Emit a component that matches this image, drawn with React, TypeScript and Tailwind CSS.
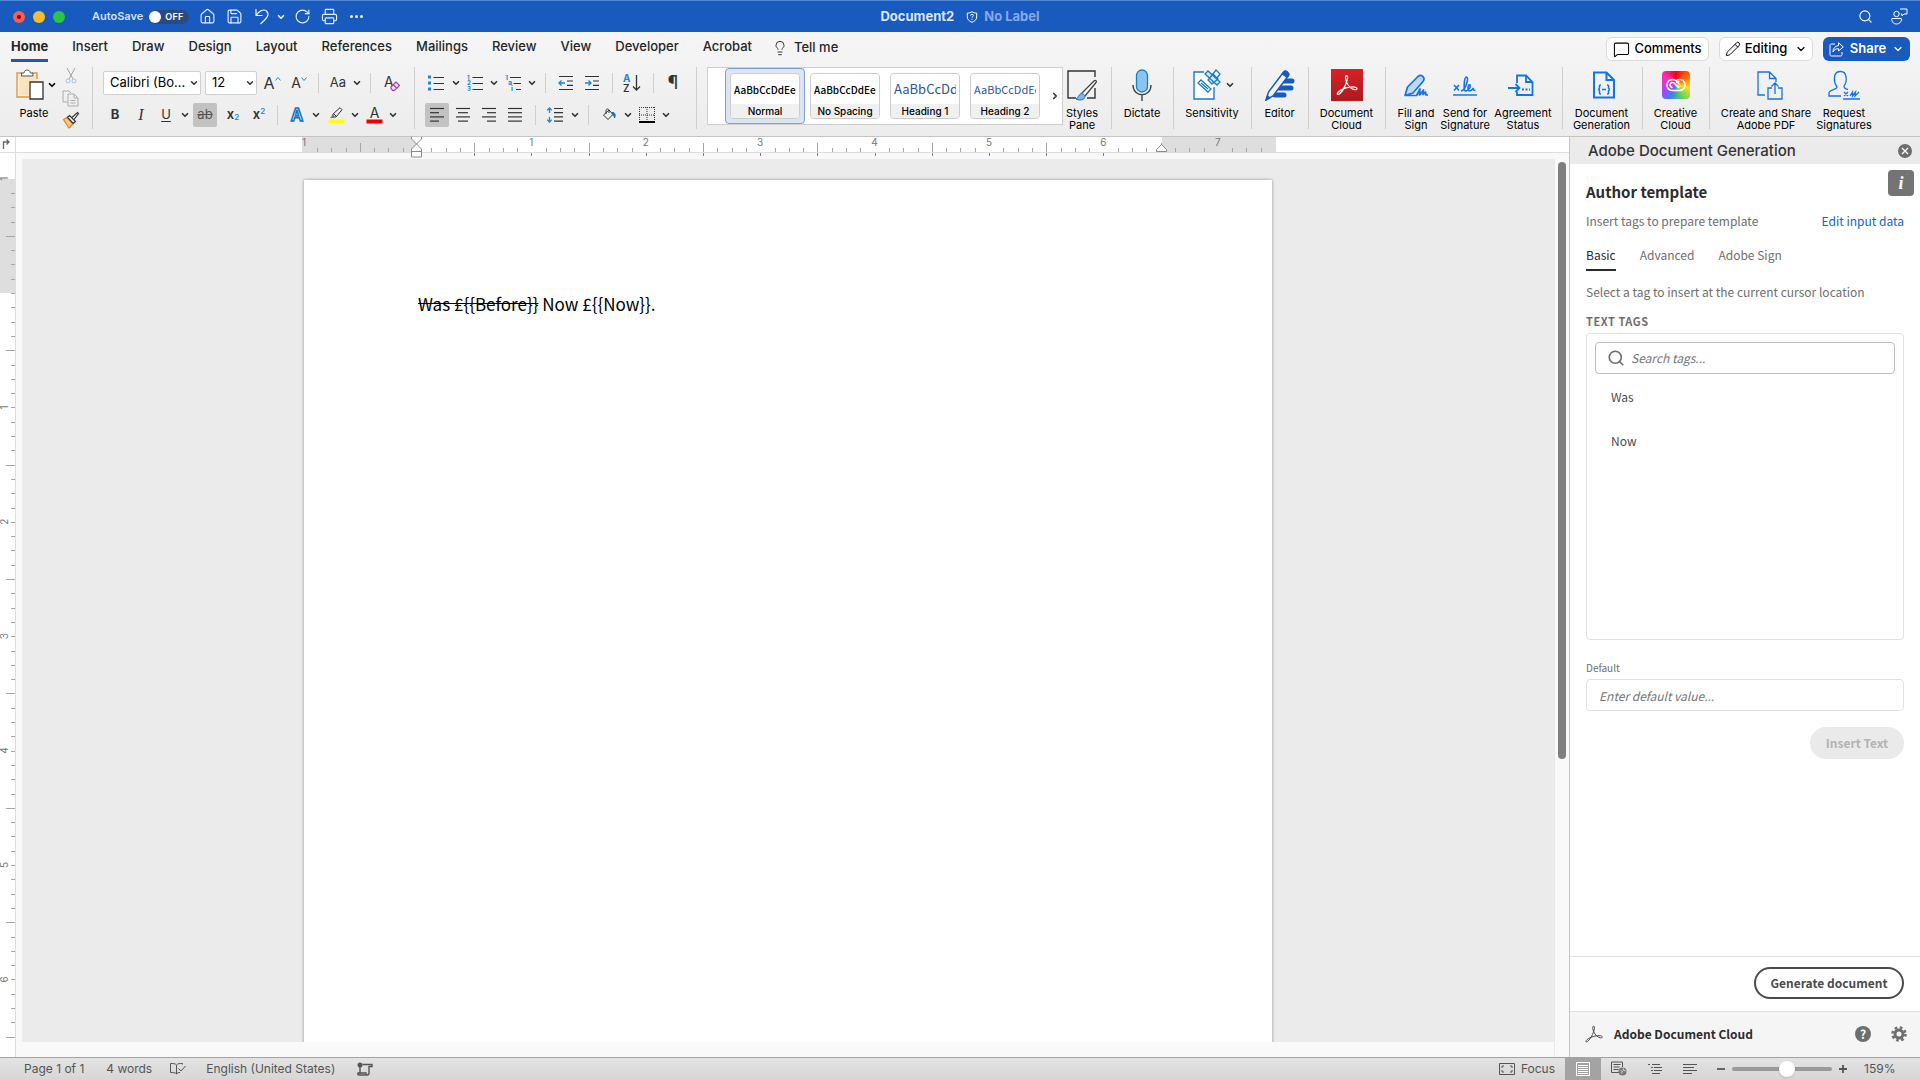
import { useState, type ReactNode } from "react";
import { ChevronDown, ChevronRight, Home, Save, RotateCw, Printer, Search, MessageSquare, Pencil, Lightbulb } from "lucide-react";
import clsx from "clsx";

const TABS = ["Home", "Insert", "Draw", "Design", "Layout", "References", "Mailings", "Review", "View", "Developer", "Acrobat"];

const STYLES = [
  { name: "Normal", sample: "text-[10px] font-medium text-black" },
  { name: "No Spacing", sample: "text-[10px] font-medium text-black" },
  { name: "Heading 1", sample: "text-[13px] text-[#2f5597]" },
  { name: "Heading 2", sample: "text-[11px] text-[#2f5597]" },
];

const INCH = 114.4;

function Icon({ className, box = "0 0 16 16", children }: { className: string; box?: string; children: ReactNode }) {
  return (
    <svg viewBox={box} className={clsx("shrink-0", className)} fill="none" stroke="currentColor" aria-hidden="true">
      {children}
    </svg>
  );
}

function Tool({ label, className, children }: { label: string; className: string; children: ReactNode }) {
  return (
    <button aria-label={label} className={clsx("flex h-6 shrink-0 items-center justify-center", className)}>
      {children}
    </button>
  );
}

function Caret({ label, className }: { label: string; className: string }) {
  return (
    <Tool label={label} className={className}>
      <ChevronDown className="size-2.5 shrink-0" strokeWidth={4} />
    </Tool>
  );
}

function Separator({ className }: { className: string }) {
  return (
    <div className={clsx("flex shrink-0 justify-center", className)}>
      <div className="h-full w-px bg-[#cfcfcf]" />
    </div>
  );
}

function Lines({ rows }: { rows: [number, number][] }) {
  return (
    <Icon className="size-4">
      {rows.map(([x1, x2], i) => (
        <path key={i} d={`M${x1} ${1.5 + i * 4.2}H${x2}`} strokeWidth="1.2" />
      ))}
    </Icon>
  );
}

function BigTool({ label, className, icon }: { label: string[]; className: string; icon: ReactNode }) {
  return (
    <button className={clsx("flex shrink-0 flex-col items-center gap-1 text-[11px] leading-3 whitespace-nowrap text-black", className)}>
      <span className="flex h-9 items-center justify-center">{icon}</span>
      <span>
        {label.map((l) => (
          <span key={l} className="block">{l}</span>
        ))}
      </span>
    </button>
  );
}

function TitleBar() {
  return (
    <header className="grid h-8 shrink-0 grid-cols-[1fr_auto_1fr] items-center border-t border-[#4f86d6] bg-[#185abd] text-white">
      <div className="flex items-center pl-[13px]">
        <div className="flex gap-2">
          <span className="flex size-3 items-center justify-center rounded-full bg-[#fc5b57]">
            <span className="size-1 rounded-full bg-[#7c0a08]" />
          </span>
          <span className="size-3 rounded-full bg-[#fdbc2e]" />
          <span className="size-3 rounded-full bg-[#28c840]" />
        </div>
        <span className="ml-[27px] text-[11px] font-semibold text-[#d3e1f7]">AutoSave</span>
        <button role="switch" aria-checked="false" aria-label="AutoSave" className="ml-1.5 flex h-[14px] w-10 items-center gap-1 rounded-full bg-[#2b4a80] text-[9px] font-semibold tracking-wide">
          <span className="size-3 rounded-full bg-white" />
          OFF
        </button>
        <div className="ml-2.5 flex items-center text-[#e6effb]">
          <button aria-label="Home"><Home className="size-[17px]" strokeWidth={1.6} /></button>
          <button aria-label="Save" className="ml-2.5"><Save className="size-[17px]" strokeWidth={1.6} /></button>
          <button aria-label="Undo" className="ml-[11px]">
            <Icon className="size-[17px]" box="0 0 17 17">
              <path d="M2 1v6.500h6.500M2 7.500C5 3 9.500.5 12.500 3c3.500 3.500 1 6.500-6 13" strokeWidth="1.200" />
            </Icon>
          </button>
          <button aria-label="Undo history" className="ml-[5px]"><ChevronDown className="size-2.5" strokeWidth={4} /></button>
          <button aria-label="Redo" className="ml-2"><RotateCw className="size-[17px]" strokeWidth={1.6} /></button>
          <button aria-label="Print" className="ml-2.5"><Printer className="size-[17px]" strokeWidth={1.6} /></button>
          <button aria-label="More" className="ml-3 flex gap-0.5">
            <span className="size-[3px] rounded-full bg-current" />
            <span className="size-[3px] rounded-full bg-current" />
            <span className="size-[3px] rounded-full bg-current" />
          </button>
        </div>
      </div>
      <div className="flex items-center text-[13px] font-bold">
        <h1 className="text-[#dbe7f9]">Document2</h1>
        <Icon className="ml-3 size-3" box="0 0 12 12">
          <path d="M6 .7c1.400 1 3 1.400 4.700 1.400V6c0 2.500-2 4.300-4.700 5.300C3.300 10.300 1.300 8.500 1.300 6V2.100C3 2.100 4.600 1.700 6 .7zM4.600 4.600c0-1.800 2.800-1.700 2.800 0 0 .9-1.400 1-1.400 2.100M6 7.800v1" />
        </Icon>
        <span className="ml-1.5 text-[#84abe6]">No Label</span>
      </div>
      <div className="flex items-center justify-end gap-[18px] pr-3">
        <button aria-label="Search"><Search className="size-[15px]" strokeWidth={1.8} /></button>
        <button aria-label="Presence">
          <Icon className="size-[17px]" box="0 0 17 17">
            <circle cx="5.500" cy="6" r="2.700" />
            <path d="M1 10.500h9c.5 0 .7.300.6.800-.5 3-2.300 4.700-5.100 4.700S1.200 14.500.7 11.500c0-.6.100-1 .3-1zM9 1h7v5h-3l-2 2V6H9.800" />
          </Icon>
        </button>
      </div>
    </header>
  );
}

function TabRow() {
  const [active, setActive] = useState("Home");
  return (
    <div className="flex h-8 shrink-0 items-center justify-between pr-2.5 pl-[11px]">
      <nav className="flex items-center gap-6 text-[13px] font-medium text-[#262626]">
        {TABS.map((t) => (
          <button
            key={t}
            onClick={() => setActive(t)}
            className={clsx("h-7 border-b-[3px] pt-px", t === active ? "border-[#2b579a] font-bold" : "border-transparent")}
          >
            {t}
          </button>
        ))}
        <button className="-ml-1 flex items-center gap-1.5">
          <Lightbulb className="size-4" strokeWidth={1.4} />
          Tell me
        </button>
      </nav>
      <div className="flex gap-2.5 pt-0.5 text-[13px] font-medium text-black">
        <button className="flex h-6 w-[103px] items-center justify-center gap-1 rounded-md border border-[#dcdcdc] bg-white">
          <MessageSquare className="size-[17px]" strokeWidth={1.5} />
          Comments
        </button>
        <button className="flex h-6 w-[94px] items-center justify-center gap-1 rounded-md border border-[#dcdcdc] bg-white">
          <Pencil className="size-4" strokeWidth={1.4} />
          Editing
          <ChevronDown className="ml-1 size-3" strokeWidth={2.4} />
        </button>
        <button className="flex h-6 w-[87px] items-center justify-center gap-1.5 rounded-md bg-[#185abd] font-semibold text-white">
          <Icon className="size-[15px]" box="0 0 15 15">
            <path d="M6 2H2.500C1.500 2 1 2.500 1 3.500v9c0 1 .5 1.500 1.500 1.500h9c1 0 1.500-.5 1.500-1.500V10M9.500.8 14.300 5 9.500 9V6.700C6.800 6.600 5 7.800 4 10c0-3.600 2-6 5.500-6.400z" strokeLinejoin="round" />
          </Icon>
          Share
          <ChevronDown className="size-3" strokeWidth={2.4} />
        </button>
      </div>
    </div>
  );
}

function ClipboardGroup() {
  return (
    <div className="flex w-[85px] shrink-0 pl-3">
      <div className="flex w-11 flex-col items-center">
        <div className="flex h-9 items-center self-start pl-1">
          <button aria-label="Paste">
            <Icon className="h-8 w-7" box="0 0 28 32">
              <path d="M6 4H1v24h12" stroke="#e8963a" strokeWidth="1.400" />
              <path d="M3 6v20h10V12h8V6z" fill="#fbe3bd" stroke="none" />
              <path d="M16 4h5v6" stroke="#e8963a" strokeWidth="1.400" />
              <path d="M5.500 7V4H8c.3-4 6-4 6.400 0h2.500v3z" fill="#fff" stroke="#555" />
              <path d="M14 13h13v17H14z" fill="#fff" stroke="#333" strokeWidth="1.300" />
            </Icon>
          </button>
          <Caret label="Paste options" className="ml-[3px] w-2.5" />
        </div>
        <span className="mt-1 text-[11px] leading-3 text-black">Paste</span>
      </div>
      <div className="ml-1.5 flex flex-col gap-1">
        <button aria-label="Cut">
          <Icon className="size-[18px]" box="0 0 18 18">
            <path d="M5 1l6 11M13 1 7 12" stroke="#a3a3a3" />
            <circle cx="6" cy="14" r="2" stroke="#9cc7e8" />
            <circle cx="12" cy="14" r="2" stroke="#9cc7e8" />
          </Icon>
        </button>
        <button aria-label="Copy">
          <Icon className="size-[18px]" box="0 0 18 18">
            <path d="M5 13H1V2h6l2 2M6 5h6l4 4v8H6zM12 5v4h4M8.500 11.500h5M8.500 14h5" stroke="#ababab" />
          </Icon>
        </button>
        <button aria-label="Format painter">
          <Icon className="size-[18px]" box="0 0 18 18">
            <path d="M1.500 8.500 5 6.500l6 6.500-4 4z" fill="#f8c68a" stroke="#e8862c" strokeWidth="1.300" />
            <path d="m5.500 6.200 2-1.700 6 6-2.300 2zM10 6.500l5.500-5 1 1L12 8.500" fill="#fff" stroke="#333" strokeWidth="1.200" />
          </Icon>
        </button>
      </div>
    </div>
  );
}

function FontGroup() {
  return (
    <div className="flex w-[308px] shrink-0 flex-col gap-2 pl-1 text-[#333]">
      <div className="flex h-6 items-center">
        <div className="relative flex h-6 w-[98px] shrink-0 items-center">
          <select aria-label="Font" className="size-full appearance-none rounded-xs border border-[#d0d0d0] bg-white pl-1.5 text-[13px] text-black">
            <option>Calibri (Bo...</option>
          </select>
          <ChevronDown className="pointer-events-none absolute right-0.5 size-2.5" strokeWidth={3.5} />
        </div>
        <div className="relative ml-1 flex h-6 w-[52px] shrink-0 items-center">
          <select aria-label="Font size" className="size-full appearance-none rounded-xs border border-[#d0d0d0] bg-white pl-1.5 text-[13px] text-black">
            <option>12</option>
          </select>
          <ChevronDown className="pointer-events-none absolute right-0.5 size-2.5" strokeWidth={3.5} />
        </div>
        <Tool label="Increase font size" className="w-[30px] text-base">
          A<Icon className="mb-2 size-1.5" box="0 0 6 6"><path d="m.5 4.500 2.500-3 2.500 3" stroke="#1e88d2" /></Icon>
        </Tool>
        <Tool label="Decrease font size" className="w-6 text-sm">
          A<Icon className="mb-2 size-1.5" box="0 0 6 6"><path d="m.5 1.500 2.500 3 2.500-3" stroke="#1e88d2" /></Icon>
        </Tool>
        <Separator className="h-5 w-[14px]" />
        <Tool label="Change case" className="w-[26px] text-[13px]">Aa</Tool>
        <Caret label="Case options" className="w-3" />
        <Separator className="h-5 w-[14px]" />
        <Tool label="Clear formatting" className="w-[30px]">
          <Icon className="size-4">
            <text x="0" y="12" fontSize="14" fill="#333" stroke="none">A</text>
            <path d="m7 12 5-5 3.500 3.300-5 5H8.500L7 13.500z M9.300 9.800l3.400 3.300" fill="#f2e2f5" stroke="#a33cb5" strokeWidth="1.200" />
          </Icon>
        </Tool>
      </div>
      <div className="flex h-6 items-center">
        <Tool label="Bold" className="w-6 text-[13px] font-bold">B</Tool>
        <Tool label="Italic" className="w-7 font-['Liberation_Serif',serif] text-base italic">I</Tool>
        <Tool label="Underline" className="w-[22px] text-[13px] underline underline-offset-2">U</Tool>
        <Caret label="Underline options" className="w-4" />
        <Tool label="Strikethrough" className="w-6 rounded-xs bg-[#c2c2c2] text-[13px] text-[#555] line-through">ab</Tool>
        <Tool label="Subscript" className="w-8 text-[13px] font-semibold">x<sub className="text-[8px] text-[#1e88d2]">2</sub></Tool>
        <Tool label="Superscript" className="w-5 text-[13px] font-semibold">x<sup className="text-[8px] text-[#1e88d2]">2</sup></Tool>
        <Separator className="h-5 w-4" />
        <Tool label="Text effects" className="w-6">
          <Icon className="size-[18px]" box="0 0 18 18">
            <text x="9" y="15" textAnchor="middle" fontSize="17" fontWeight="600" fill="#fff" stroke="#1670c4" strokeWidth="1.500">A</text>
          </Icon>
        </Tool>
        <Caret label="Text effect options" className="w-[14px]" />
        <Tool label="Highlight" className="w-[26px]">
          <Icon className="size-[17px]" box="0 0 17 17">
            <path d="m5 7 7-6.300 2 2L8 10H4.500zM5.500 6.500l3 3" />
            <path d="M2 11h4l1-1.500-2-2z" fill="#777" stroke="none" />
            <path d="M.5 14.500h16" stroke="#ffff00" strokeWidth="4" />
          </Icon>
        </Tool>
        <Caret label="Highlight options" className="w-3" />
        <Tool label="Font color" className="w-[26px]">
          <Icon className="size-[17px]" box="0 0 17 17">
            <text x="8.500" y="11" textAnchor="middle" fontSize="14" fill="#333" stroke="none">A</text>
            <path d="M.5 14.500h16" stroke="#f00000" strokeWidth="4" />
          </Icon>
        </Tool>
        <Caret label="Font color options" className="w-3" />
      </div>
    </div>
  );
}

function ParagraphGroup() {
  return (
    <div className="flex w-[268px] shrink-0 flex-col gap-2 text-[#333]">
      <div className="flex h-6 items-center">
        <Tool label="Bullets" className="w-[30px]">
          <Icon className="size-4">
            <path d="M0 2h3M0 8h3M0 14h3" stroke="#1e88d2" strokeWidth="3" />
            <path d="M5.500 2.500H16M5.500 8.500H16M5.500 14.500H16" strokeWidth="1.200" />
          </Icon>
        </Tool>
        <Caret label="Bullet options" className="w-2.5" />
        <Tool label="Numbering" className="w-7">
          <Icon className="size-4">
            {["1", "2", "3"].map((n, i) => (
              <text key={n} x="0" y={4.5 + i * 5.7} fontSize="6" fontWeight="700" fill="#1e88d2" stroke="none">{n}</text>
            ))}
            <path d="M5.500 2.500H16M5.500 8.500H16M5.500 14.500H16" strokeWidth="1.200" />
          </Icon>
        </Tool>
        <Caret label="Numbering options" className="w-2.5" />
        <Tool label="Multilevel list" className="w-7">
          <Icon className="size-4">
            {["1", "a", "i"].map((n, i) => (
              <text key={n} x={i * 3} y={4.5 + i * 5.7} fontSize="7" fontWeight="700" fill="#1e88d2" stroke="none">{n}</text>
            ))}
            <path d="M5 2.500h11M8.500 8.500H16M11 14.500h5" strokeWidth="1.200" />
          </Icon>
        </Tool>
        <Caret label="Multilevel options" className="w-2.5" />
        <Separator className="h-5 w-4" />
        <Tool label="Decrease indent" className="w-[26px]">
          <Icon className="size-4">
            <path d="M1 1.500h14M9 6h6M9 10.300h6M1 14.500h14" strokeWidth="1.200" />
            <path d="M7 8H1m2.500-2.500L1 8l2.500 2.500" stroke="#1e88d2" strokeWidth="1.400" />
          </Icon>
        </Tool>
        <Tool label="Increase indent" className="w-[26px]">
          <Icon className="size-4">
            <path d="M1 1.500h14M9 6h6M9 10.300h6M1 14.500h14" strokeWidth="1.200" />
            <path d="M1 8h6M4.500 5.500 7 8l-2.500 2.500" stroke="#1e88d2" strokeWidth="1.400" />
          </Icon>
        </Tool>
        <Separator className="h-5 w-[14px]" />
        <Tool label="Sort" className="w-[26px]">
          <Icon className="size-[18px]" box="0 0 18 18">
            <text x="0" y="8" fontSize="10" fontWeight="700" fill="#1e88d2" stroke="none">A</text>
            <text x="0" y="17.500" fontSize="10" fontWeight="600" fill="#333" stroke="none">Z</text>
            <path d="M13.500 1v15M10 12.500l3.500 3.500 3.500-3.500" strokeWidth="1.300" />
          </Icon>
        </Tool>
        <Separator className="h-5 w-4" />
        <Tool label="Show formatting marks" className="w-6 text-lg">¶</Tool>
      </div>
      <div className="flex h-6 items-center pl-1">
        <Tool label="Align left" className="w-6 rounded-xs bg-[#c2c2c2]"><Lines rows={[[1, 15], [1, 10], [1, 15], [1, 10]]} /></Tool>
        <Tool label="Center" className="w-7"><Lines rows={[[1, 15], [3, 13], [1, 15], [3, 13]]} /></Tool>
        <Tool label="Align right" className="w-6"><Lines rows={[[1, 15], [6, 15], [1, 15], [6, 15]]} /></Tool>
        <Tool label="Justify" className="w-7"><Lines rows={[[1, 15], [1, 15], [1, 15], [1, 15]]} /></Tool>
        <Separator className="h-5 w-3" />
        <Tool label="Line spacing" className="w-7">
          <Icon className="size-4">
            <path d="M2.500 1v5M2.500 10v5M.3 3.200 2.500 1l2.200 2.200M.3 12.800 2.500 15l2.200-2.200" stroke="#1e88d2" strokeWidth="1.300" />
            <path d="M7 1.500h9M7 5.700h9M7 9.900h9M7 14.100h9" strokeWidth="1.200" />
          </Icon>
        </Tool>
        <Caret label="Line spacing options" className="w-3" />
        <Separator className="h-5 w-[14px]" />
        <Tool label="Shading" className="w-7">
          <Icon className="size-[14px]" box="0 0 14 14">
            <path d="M1.500 7 7 2l4 4.500-5 5zM4 6V2.500c0-2 3-2 3 0V5" />
            <path d="M10 4.500c3-.3 4 2.500 2.500 5.500-.2-2-1-3-2-3z" fill="#1670c4" stroke="#1670c4" />
          </Icon>
        </Tool>
        <Caret label="Shading options" className="w-2.5" />
        <Tool label="Borders" className="w-7">
          <Icon className="size-4">
            <path d="M.5 0v15M15.500 0v15M0 .5h16M8 0v15M0 8h16" strokeDasharray="1 1" />
            <path d="M0 15h16" stroke="#000" strokeWidth="2" />
          </Icon>
        </Tool>
        <Caret label="Border options" className="w-2.5" />
      </div>
    </div>
  );
}

function StyleGallery() {
  return (
    <div className="ml-1 flex h-[58px] w-[356px] shrink-0 items-center self-start border border-[#cfcfcf] bg-white pl-[17px]">
      {STYLES.map((s, i) => (
        <button key={s.name} className={clsx("rounded-sm border p-1", i === 0 ? "border-[#7f9fd0] bg-[#dbe5f4]" : "border-transparent")}>
          <span className="flex h-[46px] w-[70px] flex-col overflow-hidden rounded-sm border border-[#cdcdcd] bg-white">
            <span className={clsx("mx-[3px] flex flex-1 items-center overflow-hidden font-['Noto_Sans_CJK_SC',sans-serif] whitespace-nowrap", s.sample)}>
              AaBbCcDdEe
            </span>
            <span className="bg-[#f0f0f0] text-[10px] leading-[14px] font-medium text-black">{s.name}</span>
          </span>
        </button>
      ))}
      <button aria-label="More styles" className="ml-[5px] text-[#333]"><ChevronRight className="size-2.5" strokeWidth={4} /></button>
    </div>
  );
}

const AcrobatMark = () => (
  <path d="M9.800 2.200C8.300 2 8.500 5 9.700 7.600c1.400 3.300 4 5.900 6.800 6.300 2.500.4 2.600-1.900-.2-2.200-3.500-.4-8.600.8-11.900 2.900-2.700 1.700-3 3.400-1.900 3.300 2-.3 5-5 6.500-8.600 1.300-3 2.200-6.800.8-7.100z" />
);

function Ribbon() {
  return (
    <div className="flex h-[73px] shrink-0 overflow-hidden border-b border-[#c4c4c4] pt-[3px]">
      <ClipboardGroup />
      <Separator className="h-[62px] w-[14px]" />
      <div className="pt-1"><FontGroup /></div>
      <Separator className="h-[62px] w-[14px]" />
      <div className="pt-1"><ParagraphGroup /></div>
      <Separator className="h-[62px] w-[14px]" />
      <StyleGallery />
      <BigTool
        label={["Styles", "Pane"]}
        className="w-[38px]"
        icon={
          <Icon className="h-8 w-[30px]" box="0 0 30 32">
            <path d="M9 29H1V2h27v6M28 19v10h-8" stroke="#333" strokeWidth="1.400" />
            <path d="M14 25 27 12c1.500-1.500 3 0 2 1.500L18 27" fill="#fff" stroke="#444" strokeWidth="1.300" />
            <path d="M9 30c2 0 2.500-5 5.500-5.500 2.500 0 4 2.500 3 4.500-1.500 2.500-6 2.500-8.500 1z" fill="#7db9e8" stroke="#1670c4" />
          </Icon>
        }
      />
      <Separator className="h-[62px] w-5" />
      <BigTool
        label={["Dictate"]}
        className="w-[42px]"
        icon={
          <Icon className="h-8 w-5" box="0 0 20 32">
            <rect x="4.500" y="1" width="11" height="22" rx="5.500" fill="#8cc4f0" stroke="#1a7cc8" strokeWidth="1.300" />
            <path d="M1 16c0 13 18 13 18 0M10 26v6" stroke="#444" strokeWidth="1.400" />
          </Icon>
        }
      />
      <Separator className="h-[62px] w-5" />
      <BigTool
        label={["Sensitivity"]}
        className="w-[58px]"
        icon={
          <>
            <Icon className="ml-1 h-8 w-7 text-[#1a7cc8]" box="0 0 28 32">
              <path d="M11 3H1v27h20V18" fill="#fff" strokeWidth="1.400" />
              <path d="M5 14 8 11l10 9-3 3zM8 14l7 6" strokeWidth="1.300" />
              <path d="m12 5 3-3 12 11-3 3zM15 11l5-6 5 5-6 5z" fill="#d5e9f8" strokeWidth="1.300" />
              <path d="m20 5 3-4 4 4-3 4z" fill="#fff" strokeWidth="1.300" />
            </Icon>
            <ChevronDown className="ml-1 size-2.5 text-[#333]" strokeWidth={4} />
          </>
        }
      />
      <Separator className="h-[62px] w-5" />
      <BigTool
        label={["Editor"]}
        className="w-[37px]"
        icon={
          <Icon className="h-8 w-[30px] text-[#185abd]" box="0 0 30 32">
            <path d="M17 12h10M14 19h12M10 26h9" strokeWidth="5" strokeLinecap="round" />
            <path d="M1 31 3.500 23 19 2.500c1.500-1.500 6 1.500 4.500 4L8 27z" fill="#f3f3f3" strokeWidth="1.500" />
            <path d="m17 5 2-2.500c1.500-1.500 6 1.500 4.500 4L22 8.500zM1 31l1.400-4.500L5 28.600z" fill="currentColor" />
          </Icon>
        }
      />
      <Separator className="h-[62px] w-5" />
      <BigTool
        label={["Document", "Cloud"]}
        className="w-[57px]"
        icon={
          <span className="flex size-8 items-center justify-center bg-linear-to-b from-[#dc1f26] to-[#a81c20] text-white">
            <Icon className="size-6" box="0 0 20 20"><AcrobatMark /></Icon>
          </span>
        }
      />
      <Separator className="h-[62px] w-5" />
      <BigTool
        label={["Fill and", "Sign"]}
        className="w-[42px]"
        icon={
          <Icon className="size-6 text-[#1473e6]" box="0 0 24 24">
            <path d="M1 22.500 3.500 14 14 3.500c3-3 8 1 5 5L9 20l-8 2.500h11.500L16 16l-.5 6 4-5-.5 4.500 2.500-2.500.5 3h2" fill="#bcd8f8" strokeWidth="1.700" strokeLinejoin="round" />
          </Icon>
        }
      />
      <BigTool
        label={["Send for", "Signature"]}
        className="w-14"
        icon={
          <Icon className="size-6 text-[#1473e6]" box="0 0 24 24">
            <path d="m1 12 5 5.500M6 12l-5 5.500M0 22h24M8 18c5-1 8-13 5.500-14C11 4 10 19 13 18c3-1 5-4 4-6-2-1.500-3 6-.5 6 2 0 4-3 4-3s-1 3 2 2.500" strokeWidth="1.600" />
          </Icon>
        }
      />
      <BigTool
        label={["Agreement", "Status"]}
        className="w-[60px]"
        icon={
          <Icon className="mr-1 h-6 w-[26px] text-[#1473e6]" box="0 0 26 24">
            <path d="M9 10V2.500h9L24.500 9v13H9v-3M18 2.500V9h6.500M0 15h11M7.500 11l4 4-4 4" strokeWidth="1.800" />
            <path d="M14 16.500h8" strokeWidth="1.800" strokeDasharray="2 1.500" />
          </Icon>
        }
      />
      <Separator className="h-[62px] w-[18px]" />
      <BigTool
        label={["Document", "Generation"]}
        className="w-[61px]"
        icon={
          <Icon className="ml-1 h-7 w-6 text-[#1473e6]" box="0 0 24 28">
            <path d="M2 1.500h12.500L22 9v17.500H2zM14.500 1.500V9H22" strokeWidth="2" />
            <path d="M9 14c-2 0-1.500 1-1.500 2.500S7 18.500 6 18.500c1 0 1.500.5 1.500 2S7 23 9 23M15 14c2 0 1.500 1 1.500 2.500s.5 2 1.500 2c-1 0-1.500.5-1.500 2s.5 2.500-1.500 2.500M10 18.500h4" strokeWidth="1.500" />
          </Icon>
        }
      />
      <Separator className="h-[62px] w-5" />
      <BigTool
        label={["Creative", "Cloud"]}
        className="w-[47px]"
        icon={
          <span className="flex size-7 items-center justify-center rounded-sm bg-[conic-gradient(from_0deg,#f4001c,#ff6a00,#f6e02a,#5ad35a,#3d7df0,#c43cf0,#f531b4,#f4001c)] text-white">
            <Icon className="size-[22px]" box="0 0 22 22">
              <path d="M7.500 16.500a5.500 5.500 0 1 1 3.300-9.800l4.200 4M14.500 16.500a5.500 5.500 0 1 0-3.800-9.300M7.500 13.500a2.500 2.500 0 1 1 1.700-4.400l5 5M7.500 16.500h7M11 9c1-1 2-1.500 3.500-1.500" strokeWidth="1.500" />
            </Icon>
          </span>
        }
      />
      <Separator className="h-[62px] w-5" />
      <BigTool
        label={["Create and Share", "Adobe PDF"]}
        className="w-[94px]"
        icon={
          <Icon className="ml-2 h-[30px] w-[26px] text-[#1473e6]" box="0 0 26 30">
            <path d="M8 25H1V2h11.500l6.500 6.500V12M12.500 2v6.500H19M15 18h-4v11h14V18h-4M18 24V13m-3.500 3.500L18 13l3.500 3.500" strokeWidth="1.300" />
          </Icon>
        }
      />
      <BigTool
        label={["Request", "Signatures"]}
        className="w-[62px]"
        icon={
          <Icon className="h-[30px] w-8 text-[#1473e6]" box="0 0 32 30">
            <path d="M13 26H1v-3c0-3 8-3.500 8-6-3-4-5-15 3-15.500s7 10.500 4 14.500c0 2 1 3 4 3.500M16 22l4 4M20 22l-4 4M15 29h17M22 26l2.500-4v4l3-4-.5 4 4-4" strokeWidth="1.300" />
          </Icon>
        }
      />
    </div>
  );
}

function HorizontalRuler() {
  const zero = 115;
  const ticks = Array.from({ length: 67 }, (_, i) => i - 7).filter((n) => n < 60);
  return (
    <div className="flex h-4 shrink-0 border-b border-[#dedede] bg-white">
      <div className="w-4 shrink-0 border-r border-[#dedede] text-[#666]">
        <Icon className="h-4 w-3" box="0 0 12 16"><path d="M3.500 12V5H9M6.500 2.500 9 5 6.500 7.500" strokeWidth="1.300" /></Icon>
      </div>
      <div className="flex min-w-0 flex-1 justify-center pr-[14px] pl-1.5">
        <svg width="974" height="22" className="relative shrink-0 overflow-visible">
          <path d="M0 0H114V15H0zM860 0h114v15H860z" fill="#dedede" />
          {ticks.map((n) => {
            const x = Math.round(zero + (n * INCH) / 8);
            const whole = n % 8 === 0;
            const half = n % 4 === 0;
            return (
              <g key={n} stroke="#a6a6a6">
                {!whole && <path d={`M${x + 0.5} ${half ? 6 : 11}V15`} />}
                {half && n > 0 && n < 52 && <path d={`M${x + 0.5} 16V19`} stroke="#808080" />}
              </g>
            );
          })}
          {[1, 2, 3, 4, 5, 6, 7].map((n) => (
            <text key={n} x={zero + n * INCH} y="9" textAnchor="middle" fontSize="10" fill="#777">{n}</text>
          ))}
          <text x="0" y="9" fontSize="10" fill="#777">1</text>
          <path d="M109.500 0v2l5 5 5-5V0M114.500 7l5 5v8h-10v-8zM109.500 14.500h10M859.500 7.500l5 5v2h-10v-2z" fill="#fff" stroke="#8a8a8a" />
        </svg>
      </div>
    </div>
  );
}

function VerticalRuler() {
  const zero = 140;
  return (
    <div className="w-4 shrink-0 overflow-hidden border-r border-[#dedede] bg-white">
      <svg width="15" height="1000">
        <path d="M0 26H15V140H0z" fill="#dedede" />
        {Array.from({ length: 60 }, (_, i) => i - 7).map((n) => {
          const y = Math.round(zero + (n * INCH) / 8) + 0.5;
          return <path key={n} d={`M${n % 8 !== 0 && n % 4 === 0 ? 6 : 11} ${y}H15`} stroke="#a6a6a6" />;
        })}
        {[-1, 1, 2, 3, 4, 5, 6].map((n) => {
          const y = zero + n * INCH;
          return (
            <text key={n} x="8" y={y} transform={`rotate(-90 8 ${y})`} textAnchor="middle" fontSize="10" fill="#777">{Math.abs(n)}</text>
          );
        })}
      </svg>
    </div>
  );
}

function DocumentArea() {
  return (
    <main className="flex min-w-0 flex-1 flex-col">
      <HorizontalRuler />
      <div className="flex min-h-0 flex-1">
        <VerticalRuler />
        <div className="flex min-w-0 flex-1 bg-[#f9f9f9] pt-1.5 pl-1.5">
          <div className="mb-[15px] flex min-w-0 flex-1 justify-center overflow-hidden bg-[#ebebeb] pt-[21px]">
            <article className="h-[1258px] w-[968px] shrink-0 bg-white px-[114px] pt-28 shadow-[0_0_3px_rgba(0,0,0,0.4)]">
              <p className="font-['Noto_Sans_CJK_SC',sans-serif] text-[17px] leading-6 text-black">
                <s>{"Was £{{Before}}"}</s>
                {" Now £{{Now}}."}
              </p>
            </article>
          </div>
          <div className="w-[15px] shrink-0 border-l border-[#e8e8e8] pt-[3px] pl-[3px]">
            <div className="h-[597px] w-2 rounded-full bg-[#7f7f7f]" />
          </div>
        </div>
      </div>
    </main>
  );
}

function GenerationPane() {
  const [tab, setTab] = useState("Basic");
  return (
    <aside className="flex w-[351px] shrink-0 flex-col border-l border-[#c4c4c4] bg-white font-['Noto_Sans_CJK_SC',sans-serif] text-xs leading-5 text-[#6e6e6e]">
      <div className="flex h-[27px] shrink-0 items-center justify-between bg-[#ebebeb] pr-2 pl-[18px]">
        <h2 className="font-['Inter',sans-serif] text-[15px] font-medium text-[#333]">Adobe Document Generation</h2>
        <button aria-label="Close" className="flex size-[14px] items-center justify-center rounded-full bg-[#6e6e6e] text-white">
          <Icon className="size-2" box="0 0 8 8"><path d="m1 1 6 6M7 1 1 7" strokeWidth="1.300" /></Icon>
        </button>
      </div>
      <div className="flex min-h-0 flex-1 flex-col px-4">
        <div className="flex h-[47px] items-start justify-between pt-[18px]">
          <h3 className="text-[15px] leading-5 font-bold text-[#2c2c2c]">Author template</h3>
          <button aria-label="Information" className="-mt-3 -mr-2.5 flex size-[26px] items-center justify-center rounded-sm bg-[#747474] font-['Liberation_Serif',serif] text-lg font-bold text-white italic">i</button>
        </div>
        <div className="flex justify-between">
          <span>Insert tags to prepare template</span>
          <a href="#edit" className="text-[#0d66d0]">Edit input data</a>
        </div>
        <div role="tablist" className="mt-3.5 flex gap-6">
          {["Basic", "Advanced", "Adobe Sign"].map((t) => (
            <button
              key={t}
              role="tab"
              aria-selected={t === tab}
              onClick={() => setTab(t)}
              className={clsx("border-b-2 pb-1", t === tab ? "border-[#2c2c2c] text-[#2c2c2c]" : "border-transparent")}
            >
              {t}
            </button>
          ))}
        </div>
        <p className="mt-[11px] whitespace-nowrap">Select a tag to insert at the current cursor location</p>
        <h4 className="mt-[9px] text-[11px] leading-5 font-bold tracking-wider">TEXT TAGS</h4>
        <div className="mt-0.5 h-[307px] rounded-sm border border-[#e1e1e1] p-2">
          <div className="flex h-8 items-center gap-1.5 rounded-sm border border-[#bcbcbc] pl-[11px]">
            <Search className="size-[18px]" strokeWidth={2.2} />
            <input aria-label="Search tags" placeholder="Search tags..." className="min-w-0 flex-1 italic outline-none placeholder:text-[#757575]" />
          </div>
          <ul className="pt-px text-[#4b4b4b]">
            <li className="flex h-11 items-center pl-4">Was</li>
            <li className="flex h-11 items-center pl-4">Now</li>
          </ul>
        </div>
        <label htmlFor="default-value" className="mt-[18px] text-[10px] leading-5">Default</label>
        <input id="default-value" placeholder="Enter default value..." className="mt-px h-8 shrink-0 rounded-sm border border-[#e1e1e1] pl-3 italic outline-none placeholder:text-[#757575]" />
        <button disabled className="mt-4 h-8 w-[94px] shrink-0 self-end rounded-full bg-[#eaeaea] font-bold text-[#b3b3b3]">Insert Text</button>
      </div>
      <div className="flex h-[55px] shrink-0 items-center justify-end border-t border-[#e1e1e1] pr-4 pb-0.5">
        <button className="h-8 w-[150px] rounded-full border-2 border-[#4b4b4b] font-bold text-[#4b4b4b]">Generate document</button>
      </div>
      <footer className="flex h-[46px] shrink-0 items-center border-t border-[#e1e1e1] bg-[#f5f5f5] pr-[13px] pb-0.5 pl-3.5">
        <Icon className="size-5 text-[#4b4b4b]" box="0 0 20 20"><AcrobatMark /></Icon>
        <span className="ml-2.5 font-bold text-[#2c2c2c]">Adobe Document Cloud</span>
        <button aria-label="Help" className="ml-auto flex size-4 items-center justify-center rounded-full bg-[#6e6e6e] font-bold text-white">?</button>
        <button aria-label="Settings" className="ml-5">
          <Icon className="size-4 text-[#6e6e6e]">
            <circle cx="8" cy="8" r="4" strokeWidth="3" />
            <circle cx="8" cy="8" r="6.500" strokeWidth="2.600" strokeDasharray="2.600 2.505" />
          </Icon>
        </button>
      </footer>
    </aside>
  );
}

function StatusBar() {
  const [zoom, setZoom] = useState(159);
  return (
    <footer className="flex h-[23px] shrink-0 items-center justify-between border-t border-[#a3a3a3] bg-linear-to-b from-[#e3e3e3] to-[#d6d6d6] text-xs text-[#555]">
      <div className="flex items-center pl-6">
        <span>Page 1 of 1</span>
        <span className="ml-[22px]">4 words</span>
        <button aria-label="Proofing" className="ml-[18px]">
          <Icon className="h-[14px] w-4" box="0 0 16 14"><path d="M6.500 3C5.500 1.500 3 1.500.5 1.500v9c2.500 0 5 0 6 1.500 1-1.500 2-1.500 3.500-1.500M6.500 3v9M6.500 3c1-1.500 3-1.500 6-1.500v1M8.500 6.500l2.500 2.500 4.500-5" /></Icon>
        </button>
        <span className="ml-5">English (United States)</span>
        <button aria-label="Macro recording" className="ml-[22px]">
          <Icon className="h-[14px] w-4" box="0 0 16 14">
            <circle cx="3" cy="3" r="2.500" fill="currentColor" stroke="none" />
            <path d="M3 5v7M5.500 2.500H15v2h-3V11c0 1.500-1 2-2 2H2c-1 0-1.500-1-1-2h8v2" strokeWidth="1.400" />
          </Icon>
        </button>
      </div>
      <div className="flex h-full items-center">
        <button className="flex items-center gap-1.5 pr-2.5">
          <Icon className="h-3 w-4" box="0 0 16 12"><path d="M.5.5h15v11H.5zM3 5V3h2M11 3h2v2M13 7v2h-2M5 9H3V7" /></Icon>
          Focus
        </button>
        <button aria-label="Print layout" className="flex h-full w-9 items-center justify-center bg-[#a3a3a3] text-white">
          <Icon className="size-[14px]" box="0 0 14 14"><path d="M.5.500h13v13H.5zM2 3.500h10M2 5.500h10M2 7.500h10M2 9.500h10M2 11.500h10" /></Icon>
        </button>
        <button aria-label="Web layout" className="ml-2.5">
          <Icon className="size-4">
            <path d="M8 11.500H.5V1h11v5M2.500 3.500h7M2.500 6h6M2.500 8.500h5" />
            <circle cx="11.500" cy="10.500" r="4" fill="#777" stroke="none" />
            <path d="M9.500 9.500l2 1-1 2M12.500 7.500l-.5 1.500 2.500 1" stroke="#ddd" />
          </Icon>
        </button>
        <button aria-label="Outline" className="ml-[21px]">
          <Icon className="h-3 w-[14px]" box="0 0 14 12"><path d="M0 1.500h2M4 1.500h8M3 4.500h2M6 4.500h8M3 7.500h2M6 7.500h8M4 10.500h8" /></Icon>
        </button>
        <button aria-label="Draft" className="ml-[21px]">
          <Icon className="h-3 w-[14px]" box="0 0 14 12"><path d="M0 1.500h14M0 4.500h11M0 7.500h14M0 10.500h9" /></Icon>
        </button>
        <button aria-label="Zoom out" className="ml-5"><span className="block h-0.5 w-2 bg-[#666]" /></button>
        <input
          type="range"
          aria-label="Zoom"
          min={10}
          max={274}
          value={zoom}
          onChange={(e) => setZoom(Number(e.target.value))}
          className="mx-[7px] h-1 w-[100px] appearance-none rounded-full bg-[#9a9a9a] [&::-webkit-slider-thumb]:size-4 [&::-webkit-slider-thumb]:appearance-none [&::-webkit-slider-thumb]:rounded-full [&::-webkit-slider-thumb]:bg-white [&::-webkit-slider-thumb]:shadow-sm"
        />
        <button aria-label="Zoom in"><Icon className="size-2" box="0 0 8 8"><path d="M0 4h8M4 0v8" strokeWidth="1.800" /></Icon></button>
        <span className="w-[73px] pl-[17px]">{zoom}%</span>
      </div>
    </footer>
  );
}

export default function App() {
  return (
    <div className="flex h-screen flex-col overflow-hidden bg-[#f3f3f3] font-['Inter','Liberation_Sans',sans-serif]">
      <TitleBar />
      <div className="shrink-0 bg-linear-to-b from-[#f6f6f6] to-[#ececec]">
        <TabRow />
        <Ribbon />
      </div>
      <div className="flex min-h-0 flex-1">
        <DocumentArea />
        <GenerationPane />
      </div>
      <StatusBar />
    </div>
  );
}
